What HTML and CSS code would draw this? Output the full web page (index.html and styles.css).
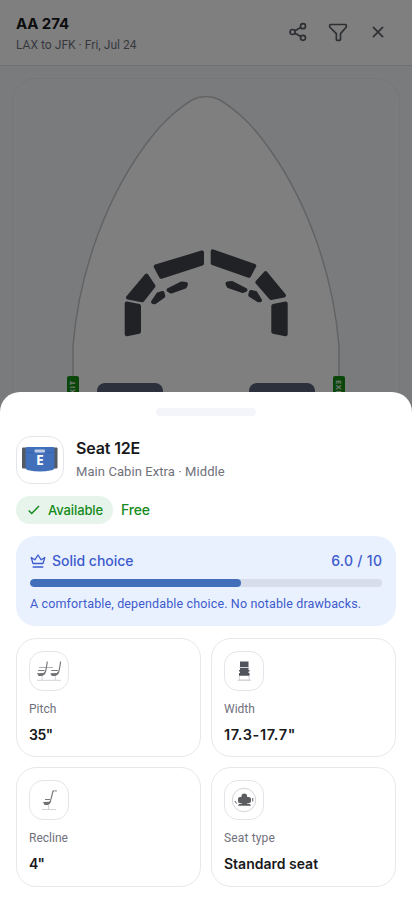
FILE: index.html
```html
<!DOCTYPE html>
<html lang="en">
<head>
<meta charset="utf-8">
<meta name="viewport" content="width=device-width, initial-scale=1">
<title>AA 274 seat map</title>
<link rel="stylesheet" href="styles.css">
</head>
<body>
<div class="app">
  <header class="topbar">
    <div class="flight">
      <h1 class="flight-number">AA 274</h1>
      <p class="flight-route">LAX to JFK · Fri, Jul 24</p>
    </div>
    <div class="actions">
      <svg viewBox="0 0 24 24" class="icon"><circle cx="5.500" cy="12" r="3"/><circle cx="18" cy="5" r="3"/><circle cx="18" cy="19" r="3"/><path d="M8.200 10.500l7.200-4M8.200 13.500l7.200 4"/></svg>
      <svg viewBox="0 0 24 24" class="icon"><path d="M3 3h18a1 1 0 0 1 1 1v2l-7 8v7a1 1 0 0 1-1 1h-3a1 1 0 0 1-1-1v-7L2 6V4a1 1 0 0 1 1-1z"/></svg>
      <svg viewBox="0 0 24 24" class="icon"><path d="M6.500 6.500l11 11M17.500 6.500l-11 11"/></svg>
    </div>
  </header>
  <main class="map">
    <div class="map-card">
      <svg class="cabin" viewBox="0 0 388 330">
        <path class="hull" d="M61 340V268C67 195 94 116 141 57C152 43 168 29 181 21.500Q187 18.500 194 18.500T207 21.500C220 29 236 43 247 57C294 116 321 195 327 268V340z"/>
        <g class="galley">
          <path d="M143.700 188.500L190 174.500V185.500L149.200 198.800z"/>
          <path d="M200.700 173.300L242.300 187.800L237 197.800L200.700 185z"/>
          <path d="M134.500 197.500L141.500 208L130.300 222.200L116 219.500z"/>
          <path d="M253.700 195.200L272 217.500L259 220L245.300 204.300z"/>
          <path d="M114.700 225.500L127 228V253.700L114.700 256.200z"/>
          <path d="M273.700 225.500L261.300 228V253.700L273.700 256.200z"/>
          <path d="M156.500 212L169.500 205.500L174 206L173 208.500L159 213.500z"/>
          <path d="M233.500 212L220 205L215.500 205.500L216.500 208L231 213z"/>
          <path d="M141 224L146 216.500L150.500 215L151.300 218L142.500 224.300z"/>
          <path d="M248 222.300L243.500 215L239 214L238.200 217L246.500 222.300z"/>
        </g>
        <rect class="block" x="85" y="305" width="66" height="40" rx="8"/>
        <rect class="block" x="237" y="305" width="66" height="40" rx="8"/>
        <rect class="exit" x="55" y="298" width="12" height="28" rx="2"/>
        <rect class="exit" x="321" y="298" width="12" height="28" rx="2"/>
        <text class="exit-text" transform="translate(63.300 320.800) rotate(-90)">EXIT</text>
        <text class="exit-text" transform="translate(324.200 302) rotate(90)">EXIT</text>
      </svg>
    </div>
  </main>
</div>
<div class="scrim"></div>
<section class="sheet">
  <div class="grabber"></div>
  <div class="seat">
    <div class="seat-thumb">
      <svg viewBox="0 0 48 48"><rect class="arm" x="6" y="11.500" width="5" height="21" rx="1"/><rect class="arm" x="36.500" y="11.500" width="5" height="21" rx="1"/><path class="cushion" d="M11 11h26q1.500 0 1.500 2v18q0 3-3 3.300-11.500 2.400-23 0-3-.3-3-3.300v-18q0-2 1.500-2z"/><path class="seam" d="M10.500 16q4 1.500 8 0M29 16q5 1.500 8.500 0"/><rect class="headrest" x="18.500" y="13.500" width="10.500" height="3" rx="1"/><text x="23.900" y="28.700" text-anchor="middle">E</text></svg>
    </div>
    <div class="seat-info">
      <h2 class="seat-name">Seat 12E</h2>
      <p class="seat-class">Main Cabin Extra · Middle</p>
    </div>
  </div>
  <div class="status">
    <span class="badge"><svg viewBox="0 0 14 14"><path d="M1.700 7.500l3 3 7.300-7.500"/></svg>Available</span>
    <span class="price">Free</span>
  </div>
  <div class="rating">
    <div class="rating-head">
      <svg viewBox="0 0 16 16"><path d="M3 10.500L1.200 4.500l3.600 2.300L8 2l3.200 4.800 3.600-2.300-1.800 6zM2.700 14h10.600"/></svg>
      <span class="verdict">Solid choice</span>
      <span class="score">6.0 / 10</span>
    </div>
    <div class="track"><div class="fill" style="width:60%"></div></div>
    <p class="note">A comfortable, dependable choice. No notable drawbacks.</p>
  </div>
  <div class="specs">
    <div class="spec">
      <div class="spec-icon"><svg viewBox="0 0 40 40"><g id="side"><path class="dark" d="M18.300 10.500L17.300 17Q16.500 22 15 23.500M9 19.500h6.500"/><path class="solid" d="M8 22.200l6.500-.2 1.500-2q-.3 4.500-3 5H9.500z"/><path class="pale" d="M13 25v4"/></g><use href="#side" x="13.300"/><path class="dark thin" d="M10 16.500h14"/><path class="pale" d="M8 29.300h24"/></svg></div>
      <p class="label">Pitch</p><p class="value v1">35"</p>
    </div>
    <div class="spec">
      <div class="spec-icon"><svg viewBox="0 0 40 40"><path class="slate" d="M16 10.500h8.500v5.500h-8.500zM16 17h8.500v5.500h-8.500zM15 19h10.500v1.500H15zM15 22h10.500v2.800H15z"/><path class="pale" d="M15.500 16.500h9.500M15.800 25l-.8 4h10.500l-.8-4M13.500 29.300h13.500"/></svg></div>
      <p class="label">Width</p><p class="value v2">17.3-17.7"</p>
    </div>
    <div class="spec">
      <div class="spec-icon"><svg viewBox="0 0 40 40"><path class="dark" d="M24 10.800L22.300 18Q21.500 22 20 23.500M16 19.500h5"/><path class="dark dash" d="M24 10.800h4"/><path class="solid" d="M14 22l6.500-.2 1.500-2q-.3 4.500-3 5.200h-3.500z"/><path class="pale" d="M19.500 25v4M13 29.500h14"/></svg></div>
      <p class="label">Recline</p><p class="value v3">4"</p>
    </div>
    <div class="spec">
      <div class="spec-icon"><svg viewBox="0 0 40 40"><circle class="pale" cx="20" cy="20" r="11.700"/><path class="grey" d="M17.500 21v-5q0-2.500 2.800-2.500t2.800 2.500v5zM14 19q0-2 2-2h2v6H15.500q-1.500 0-1.500-2zM22.700 17h1.800q2.500 0 2.500 2v2q0 2-1.500 2h-3zM18 20h5v3.500q3.500 0 4 2.200H14q.5-2.200 4-2.200z"/><path class="dark" d="M10.800 21l2 2.500M28.700 18v3.500"/></svg></div>
      <p class="label l4">Seat type</p><p class="value">Standard seat</p>
    </div>
  </div>
</section>
</body>
</html>
```
FILE: styles.css
```css
* { box-sizing: border-box; }
body { margin: 0; width: 412px; height: 915px; overflow: hidden; position: relative; background: #f5f7fb; font-family: Inter, "Liberation Sans", sans-serif; color: #18191c; }
h1, h2, p { margin: 0; white-space: nowrap; }
.topbar { display: flex; align-items: center; justify-content: space-between; height: 66px; padding: 0 24px 0 16px; background: #fff; border-bottom: 1px solid #dfe2e8; }
.flight { padding-top: 4px; }
.flight-number { font-size: 15px; line-height: 20px; font-weight: 700; letter-spacing: -.1px; }
.flight-route { font: 400 12px/22px Roboto, sans-serif; color: #70737d; letter-spacing: .03px; }
.actions { display: flex; gap: 20px; padding-bottom: 1px; }
.icon { width: 20px; height: 20px; fill: none; stroke: #5b5e66; stroke-width: 2; stroke-linecap: round; stroke-linejoin: round; }
.map { padding: 12px; }
.map-card { height: 850px; border: 1px solid #eaecef; border-radius: 24px; overflow: hidden; }
.cabin { display: block; margin: -1px; width: 388px; height: 330px; }
.hull { fill: #fff; stroke: #c5c7ca; stroke-width: 1.5; }
.galley { fill: #42444d; stroke: #42444d; stroke-width: 4; stroke-linejoin: round; }
.block { fill: #586079; }
.exit { fill: #168e16; }
.exit-text { fill: #e4f3e4; font: 700 7.500px "Open Sans", sans-serif; letter-spacing: .6px; }
.scrim { position: absolute; inset: 0; background: rgba(0, 0, 0, .5); }
.sheet { position: absolute; left: 0; right: 0; top: 392px; bottom: 0; padding: 16px; background: #fff; border-radius: 20px 20px 0 0; }
.grabber { width: 100px; height: 8px; margin: 0 auto; border-radius: 4px; background: #f4f4fb; }
.seat { display: flex; gap: 12px; margin-top: 20px; height: 48px; }
.seat-thumb { width: 48px; height: 48px; border: 1px solid #e4e5ea; border-radius: 15px; }
.seat-thumb svg { display: block; width: 48px; height: 48px; margin: -1px; }
.arm { fill: #555961; }
.cushion { fill: #416fba; }
.seam { fill: none; stroke: #315f9f; stroke-width: .6; }
.headrest { fill: #bccce8; }
.seat-thumb text { fill: #fff; font: 700 14px "Open Sans", sans-serif; }
.seat-name { font-size: 16px; line-height: 24px; font-weight: 600; letter-spacing: -.15px; }
.seat-class { font: 400 13px/24px Roboto, sans-serif; color: #70717b; letter-spacing: .08px; }
.status { display: flex; align-items: center; gap: 8px; margin-top: 12px; height: 28px; color: #168a20; font-weight: 500; }
.badge { display: flex; align-items: center; gap: 7px; width: 97px; height: 28px; padding-left: 11px; border-radius: 14px; background: #e7f4eb; font-size: 13px; letter-spacing: -.1px; }
.badge svg { width: 14px; height: 14px; fill: none; stroke: currentColor; stroke-width: 1.5; }
.price { font-size: 14px; letter-spacing: -.2px; padding-bottom: 1px; }
.rating { margin-top: 12px; height: 90px; padding: 15px 14px 0; border-radius: 20px; background: #e9f1fe; color: #3d5bcd; }
.rating-head { display: flex; align-items: center; height: 19px; font-size: 14px; font-weight: 500; }
.rating-head svg { width: 16px; height: 16px; margin-right: 6px; fill: none; stroke: currentColor; stroke-width: 1.3; stroke-linejoin: round; }
.verdict { letter-spacing: -.02px; }
.score { margin-left: auto; margin-right: -.3px; letter-spacing: .3px; }
.track { height: 8px; margin-top: 9px; border-radius: 4px; background: #d7ddea; overflow: hidden; }
.fill { height: 8px; border-radius: 4px; background: #416fba; }
.note { margin-top: 7px; font: 400 12.500px/20px Roboto, sans-serif; letter-spacing: .14px; }
.specs { display: grid; grid-template-columns: 1fr 1fr; gap: 10px; margin-top: 12px; }
.spec { height: 119px; padding: 12px; border: 1px solid #e8e8eb; border-radius: 20px; }
.spec:nth-child(n+3) { height: 120px; }
.spec-icon { width: 40px; height: 40px; border: 1px solid #e4e4eb; border-radius: 14px; }
.spec-icon svg { display: block; width: 40px; height: 40px; margin: -1px; fill: none; }
.dark { stroke: #77797d; stroke-width: 1.2; }
.thin { stroke-width: .6; }
.dash { stroke-dasharray: 1.5 .7; }
.solid { fill: #707276; }
.slate { fill: #50535e; }
.grey { fill: #5c5d60; }
.pale { stroke: #c7c8cb; stroke-width: .8; }
.label { margin-top: 8px; font: 400 12px/20px Roboto, sans-serif; color: #70717b; }
.l4 { letter-spacing: .15px; }
.value { margin-top: 6px; font-size: 14px; line-height: 20px; font-weight: 600; }
.v1 { letter-spacing: -.5px; }
.v2 { font-size: 14.500px; letter-spacing: .6px; }
.v3 { letter-spacing: -.7px; }
```
